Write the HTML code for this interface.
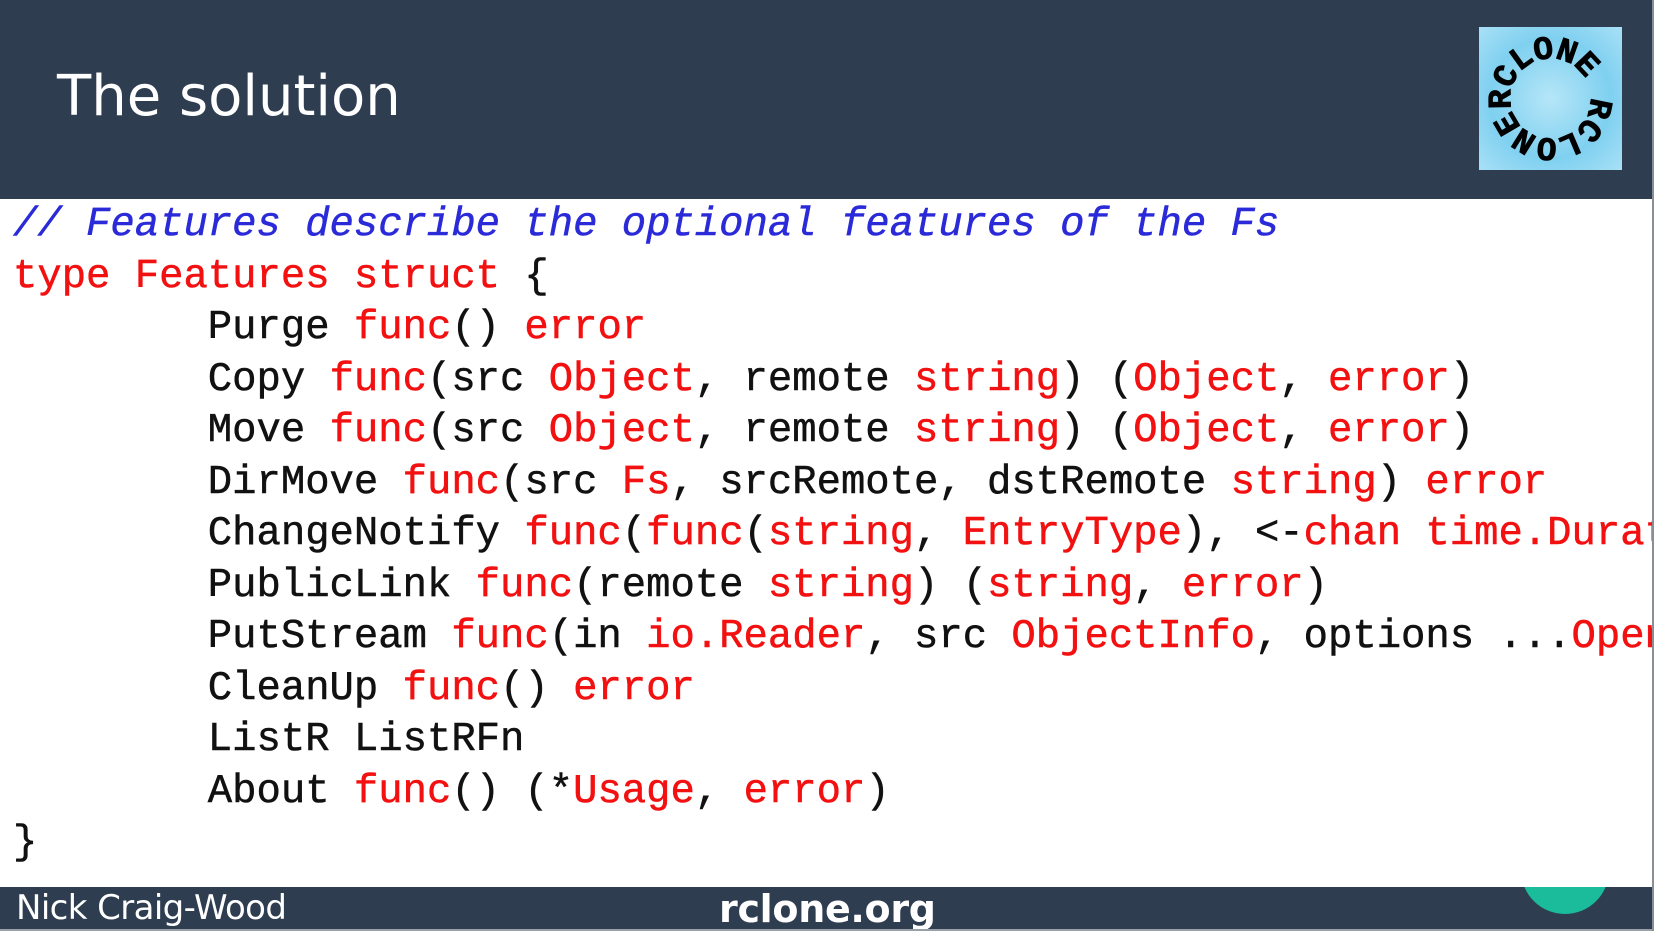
<!DOCTYPE html>
<html><head><meta charset="utf-8"><style>
html,body{margin:0;padding:0;}
body{width:1654px;height:931px;position:relative;overflow:hidden;background:#fff;font-family:"DejaVu Sans","Liberation Sans",sans-serif;}
#hdr{position:absolute;left:0;top:0;width:1654px;height:199px;background:#2e3d50;}
#title{position:absolute;left:57px;top:69px;color:#fff;font-size:56px;line-height:1;}
#badge{position:absolute;left:1521px;top:826px;width:88px;height:88px;border-radius:50%;background:#1bbc9b;z-index:1;color:#fff;font-weight:bold;font-size:40px;text-align:center;line-height:88px;}
#content{position:absolute;left:0;top:199px;width:1652px;height:688px;background:#fff;z-index:2;overflow:hidden;}
pre{margin:0;position:absolute;left:13px;top:0;font-family:"Liberation Mono","Courier New",monospace;font-size:40.6px;line-height:51.5px;color:#111;white-space:pre;-webkit-text-stroke:0.5px currentColor;}
.c{color:#2a2ad8;font-style:italic;}
.r{color:#f21010;}
#ftr{position:absolute;left:0;top:887px;width:1654px;height:42px;background:#2e3d50;z-index:0;}
#ftr .l{position:absolute;left:16px;top:1px;color:#fff;font-size:34px;letter-spacing:-0.6px;}
#ftr .m{position:absolute;left:719px;top:0px;color:#fff;font-size:38px;font-weight:bold;letter-spacing:-0.3px;}
#edge{position:absolute;right:0;top:0;width:2px;height:931px;background:#8a8f96;z-index:3;}
#bot{position:absolute;left:0;top:929px;width:1654px;height:2px;background:#9aa0a8;}
</style></head><body>
<div id="hdr">
<div id="title">The solution</div>
<svg style="position:absolute;left:1479px;top:27px" width="143" height="143" viewBox="0 0 143 143">
<defs><radialGradient id="g" cx="50%" cy="50%" r="70%"><stop offset="0" stop-color="#b6e6f8"/><stop offset="0.6" stop-color="#7fd0f0"/><stop offset="1" stop-color="#a8e0f6"/></radialGradient></defs>
<rect width="143" height="143" fill="url(#g)"/>
<path id="cp" d="M71.5,71.5 m-40,0 a40,40 0 1,1 80,0 a40,40 0 1,1 -80,0" fill="none" transform="rotate(-15 71.5 71.5)"/>
<text font-family="Liberation Mono,monospace" font-weight="bold" font-size="33" fill="#000" stroke="#000" stroke-width="0.8"><textPath href="#cp" textLength="250" lengthAdjust="spacing">RCLONE RCLONE</textPath></text>
</svg>
</div>
<div id="badge">27</div>
<div id="content"><pre style="top:1px"><span class="c">// Features describe the optional features of the Fs</span>
<span class="r">type Features struct</span> {
        Purge <span class="r">func</span>() <span class="r">error</span>
        Copy <span class="r">func</span>(src <span class="r">Object</span>, remote <span class="r">string</span>) (<span class="r">Object</span>, <span class="r">error</span>)
        Move <span class="r">func</span>(src <span class="r">Object</span>, remote <span class="r">string</span>) (<span class="r">Object</span>, <span class="r">error</span>)
        DirMove <span class="r">func</span>(src <span class="r">Fs</span>, srcRemote, dstRemote <span class="r">string</span>) <span class="r">error</span>
        ChangeNotify <span class="r">func</span>(<span class="r">func</span>(<span class="r">string</span>, <span class="r">EntryType</span>), &lt;-<span class="r">chan time.Duration</span>)
        PublicLink <span class="r">func</span>(remote <span class="r">string</span>) (<span class="r">string</span>, <span class="r">error</span>)
        PutStream <span class="r">func</span>(in <span class="r">io.Reader</span>, src <span class="r">ObjectInfo</span>, options ...<span class="r">OpenOption</span>)
        CleanUp <span class="r">func</span>() <span class="r">error</span>
        ListR ListRFn
        About <span class="r">func</span>() (*<span class="r">Usage</span>, <span class="r">error</span>)
}</pre></div>
<div id="ftr"><span class="l">Nick Craig-Wood</span><span class="m">rclone.org</span></div>
<div id="bot"></div>
<div id="edge"></div>
</body></html>
